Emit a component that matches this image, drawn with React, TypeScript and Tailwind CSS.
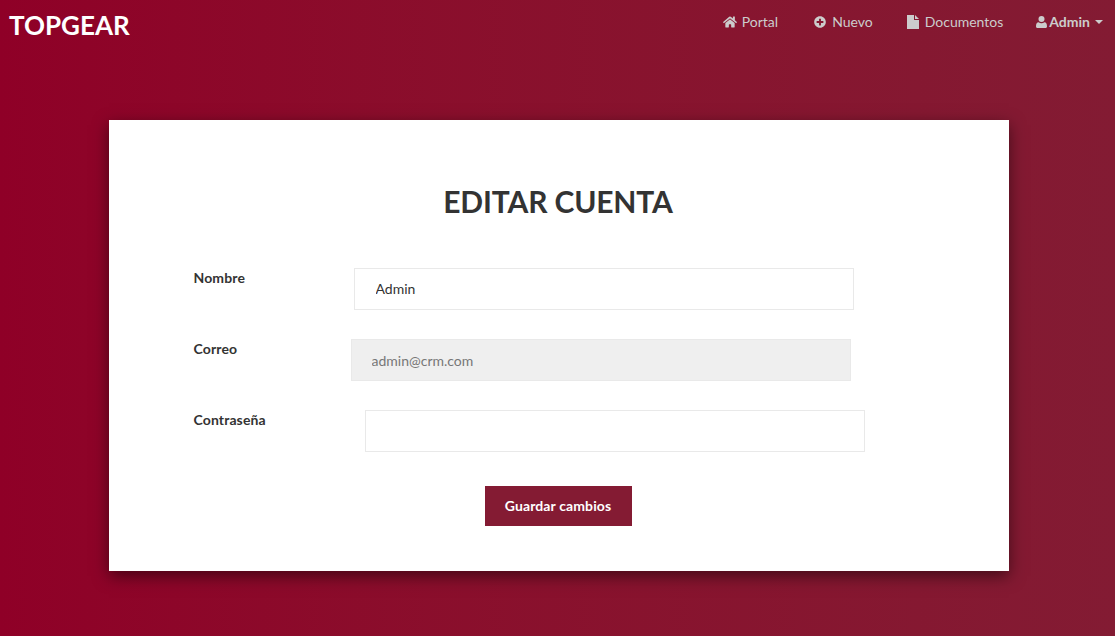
import { FaHome, FaPlusCircle } from "react-icons/fa";

const navCls = "flex items-center text-[14px] text-[#cccccc]";

function Row({ label, inputCls, value, disabled }: { label: string; inputCls: string; value: string; disabled?: boolean }) {
  return (
    <div className="flex items-start h-[42px]">
      <label className="block w-[100px] shrink-0 text-[14px] leading-[20px] font-bold tracking-[0.12px] text-[#333333]">{label}</label>
      <input
        readOnly
        value={disabled ? undefined : value}
        placeholder={disabled ? value : undefined}
        disabled={disabled}
        className={inputCls}
      />
    </div>
  );
}

export default function App() {
  return (
    <div className="h-[636px] w-[1115px] overflow-hidden bg-gradient-to-r from-[#8f0027] to-[#831b33] font-['Lato','Liberation_Sans',sans-serif]">
      <nav className="flex h-[50px] items-start justify-between">
        <a className="ml-[9px] mt-[8px] text-[26px] leading-[34px] font-bold text-white">TOPGEAR</a>
        <div className="flex items-center h-[43px] mr-[12px]">
          <a className={navCls}><FaHome className="mr-[5px] h-[14px] w-[14px]" />Portal</a>
          <a className={`${navCls} ml-[36px]`}><FaPlusCircle className="mr-[6px] h-[12px] w-[12px]" />Nuevo</a>
          <a className={`${navCls} ml-[34px]`}>
            <svg viewBox="0 0 12 14" className="mr-[6px] h-[14px] w-[12px]" fill="#cccccc"><path d="M0 0h7v5h5v9H0zM8 0l4 4H8z" /></svg>
            Documentos
          </a>
          <a className={`${navCls} ml-[33px] font-bold`}>
            <svg viewBox="0 0 11 12" className="mr-[2px] h-[12px] w-[11px]" fill="#cccccc"><circle cx="5.5" cy="3" r="3" /><path d="M0 10.5C0 7.5 1 6.2 2.6 6.2 3.4 6.9 4.4 7.2 5.5 7.2s2.1-.3 2.9-1C10 6.2 11 7.5 11 10.5 11 11.4 10.4 12 9.5 12h-8C.6 12 0 11.4 0 10.5z" /></svg>
            Admin
            <span className="ml-[5px] h-0 w-0 border-x-[4px] border-t-[4px] border-x-transparent border-t-[#cccccc]" />
          </a>
        </div>
      </nav>
      <main className="mx-[109px] mt-[70px] h-[451px] w-[900px] bg-white pt-[63px] shadow-[0_5px_15px_rgba(0,0,0,0.5)]">
        <h1 className="pr-[2px] text-center text-[30px] leading-[36px] font-bold tracking-[-0.15px] text-[#333333]">EDITAR CUENTA</h1>
        <form className="mt-[49px] px-[84.5px]">
          <div className="flex flex-col gap-[29px]">
            <Row label="Nombre" value="Admin" inputCls="ml-[60px] h-[42px] w-[500px] border border-[#e9e9e9] bg-white pl-[21px] pb-[2px] text-[14px] text-[#333333] outline-none" />
            <Row label="Correo" value="admin@crm.com" disabled inputCls="ml-[57px] h-[42px] w-[500px] border border-[#e9e9e9] bg-[#efefef] pl-[20px] text-[14px] text-[#777777] placeholder:text-[#777777] outline-none" />
            <Row label="Contraseña" value="" inputCls="ml-[71px] h-[42px] w-[500px] border border-[#e9e9e9] bg-white pl-[21px] text-[14px] outline-none" />
          </div>
          <div className="mt-[34px] flex justify-center">
            <button type="button" className="h-[40px] w-[147px] -translate-x-[1px] bg-[#841b33] pb-[2px] text-[14px] font-bold tracking-[0.12px] text-white">Guardar cambios</button>
          </div>
        </form>
      </main>
    </div>
  );
}
